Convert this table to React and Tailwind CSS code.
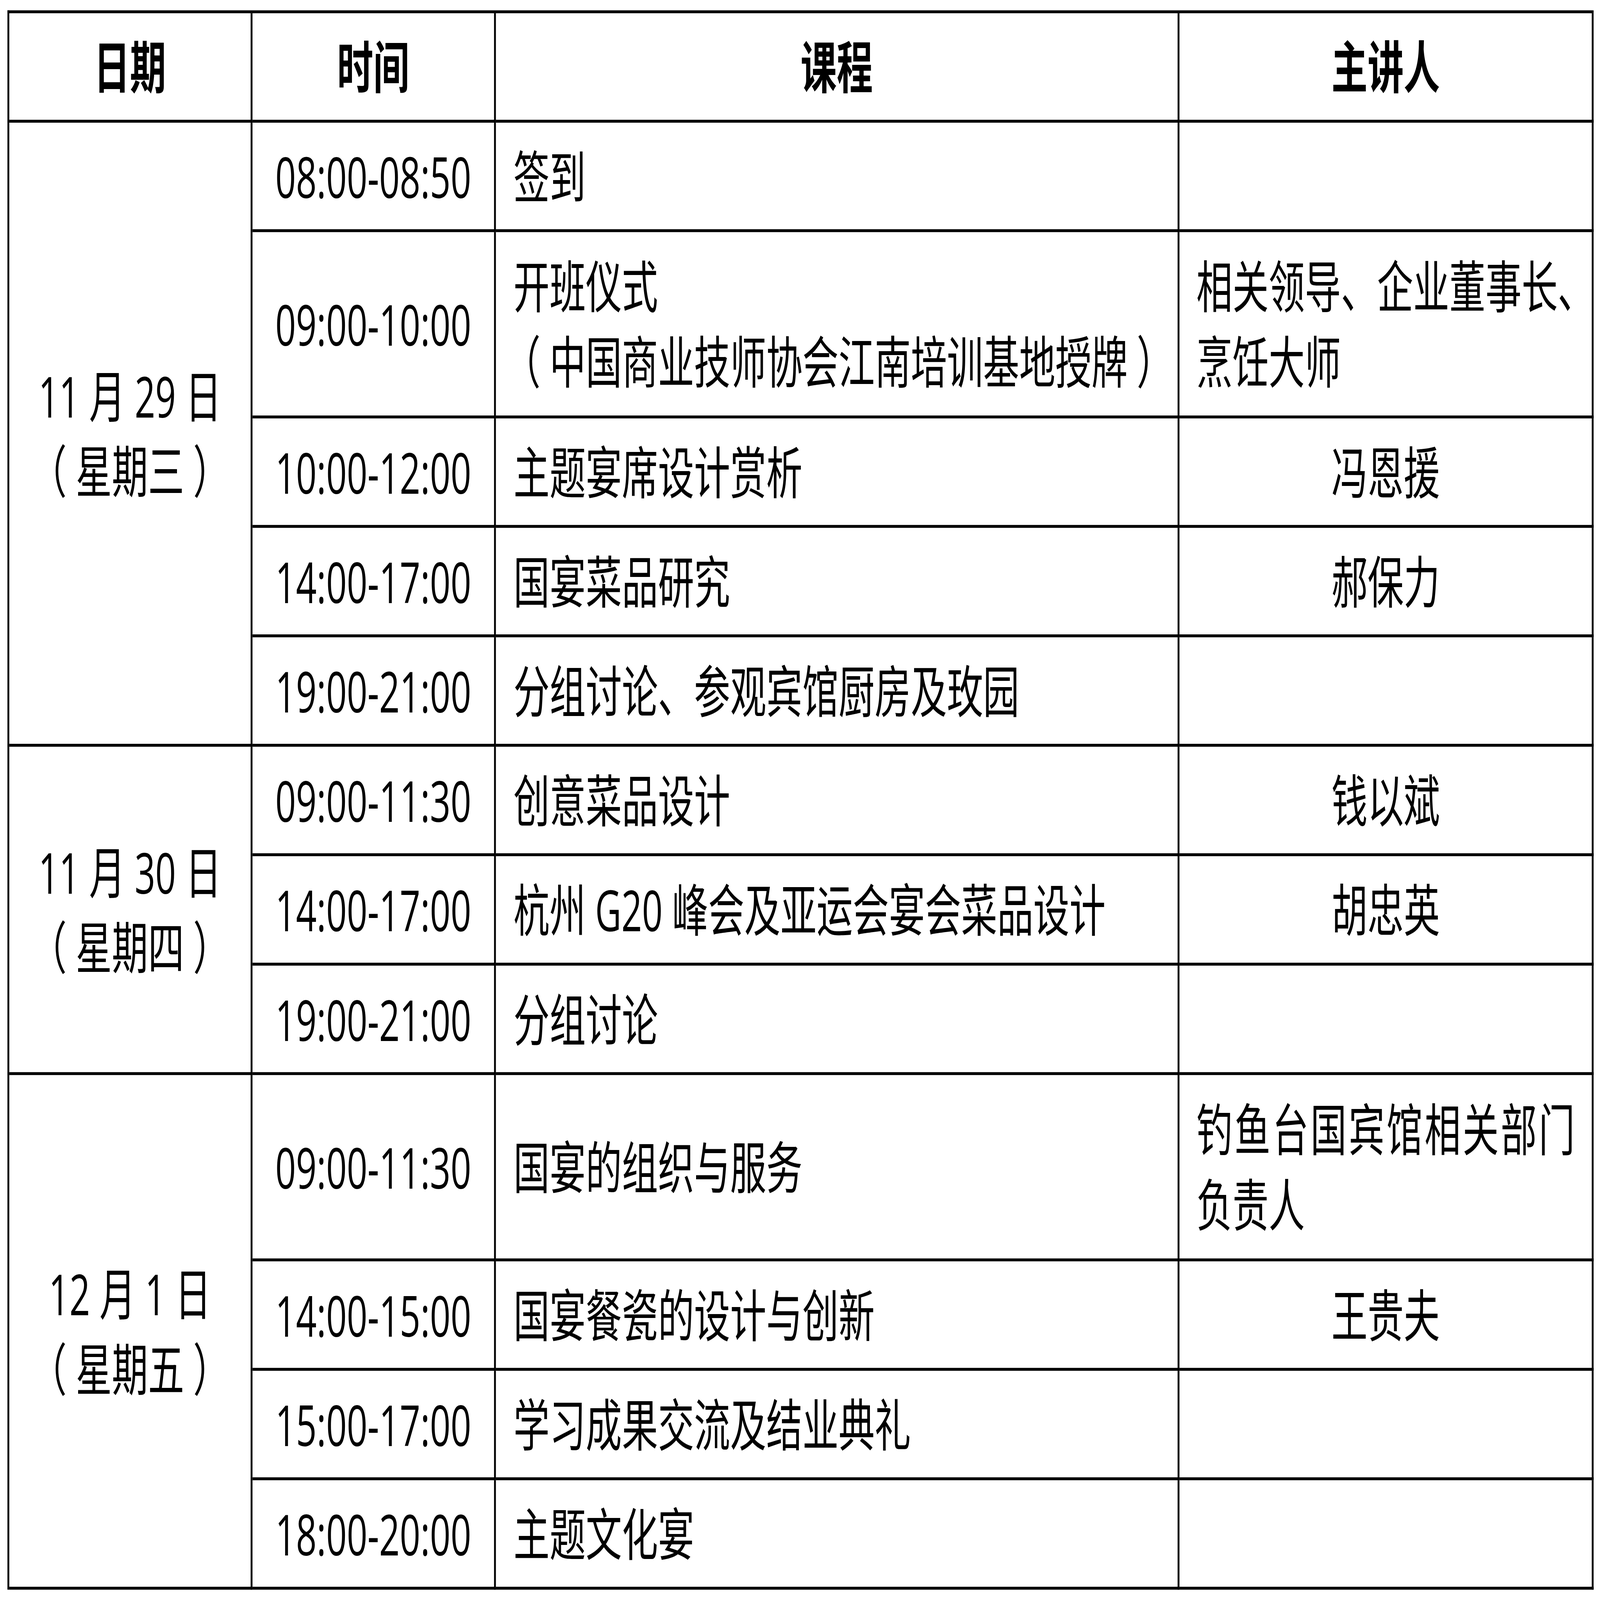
import React, { useEffect, useState } from "react";

const groups = [
  {
    date: "11 月 29 日",
    week: "（星期三）",
    span: "row-span-5",
    rows: [
      { time: "08:00-08:50", course: ["签到"], speaker: null },
      {
        time: "09:00-10:00",
        course: ["开班仪式", "（中国商业技师协会江南培训基地授牌）"],
        speakerLines: ["相关领导、企业董事长、", "烹饪大师"],
      },
      { time: "10:00-12:00", course: ["主题宴席设计赏析"], speaker: "冯恩援" },
      { time: "14:00-17:00", course: ["国宴菜品研究"], speaker: "郝保力" },
      { time: "19:00-21:00", course: ["分组讨论、参观宾馆厨房及玫园"], speaker: null },
    ],
  },
  {
    date: "11 月 30 日",
    week: "（星期四）",
    span: "row-span-3",
    rows: [
      { time: "09:00-11:30", course: ["创意菜品设计"], speaker: "钱以斌" },
      { time: "14:00-17:00", course: ["杭州 G20 峰会及亚运会宴会菜品设计"], speaker: "胡忠英" },
      { time: "19:00-21:00", course: ["分组讨论"], speaker: null },
    ],
  },
  {
    date: "12 月 1 日",
    week: "（星期五）",
    span: "row-span-4",
    rows: [
      {
        time: "09:00-11:30",
        course: ["国宴的组织与服务"],
        speakerLines: ["钓鱼台国宾馆相关部门", "负责人"],
        justifyFirst: true,
      },
      { time: "14:00-15:00", course: ["国宴餐瓷的设计与创新"], speaker: "王贵夫" },
      { time: "15:00-17:00", course: ["学习成果交流及结业典礼"], speaker: null },
      { time: "18:00-20:00", course: ["主题文化宴"], speaker: null },
    ],
  },
];

const cell = "border-r-[9px] border-b-[9px] border-black flex";

function Paren({ text }) {
  const parts = text.split(/([（）])/);
  return (
    <>
      {parts.map((p, i) =>
        p === "（" || p === "）" ? (
          <span
            key={i}
            className="inline-block w-[1em] text-center [font-feature-settings:'halt']"
          >
            {p}
          </span>
        ) : (
          <React.Fragment key={i}>{p}</React.Fragment>
        )
      )}
    </>
  );
}

function useFit() {
  const get = () => ({
    sx: typeof window !== "undefined" ? window.innerWidth / 7750 : 1,
    sy: typeof window !== "undefined" ? window.innerHeight / 4956 : 1,
  });
  const [s, setS] = useState(get);
  useEffect(() => {
    const on = () => setS(get());
    window.addEventListener("resize", on);
    return () => window.removeEventListener("resize", on);
  }, []);
  return s;
}

export default function App() {
  const { sx, sy } = useFit();
  const cells = [];
  ["日期", "时间", "课程", "主讲人"].forEach((h) => {
    cells.push(
      <div key={"h" + h} className={`${cell} items-center justify-center font-bold`}>
        <span className="whitespace-nowrap">{h}</span>
      </div>
    );
  });

  groups.forEach((g, gi) => {
    g.rows.forEach((r, ri) => {
      if (ri === 0) {
        cells.push(
          <div
            key={`d${gi}`}
            className={`${cell} ${g.span} flex-col items-center justify-center`}
          >
            <div className="whitespace-nowrap">{g.date}</div>
            <div className="whitespace-nowrap">
              <Paren text={g.week} />
            </div>
          </div>
        );
      }
      cells.push(
        <div key={`t${gi}-${ri}`} className={`${cell} items-center justify-center`}>
          <span className="whitespace-nowrap">{r.time}</span>
        </div>
      );
      cells.push(
        <div
          key={`c${gi}-${ri}`}
          className={`${cell} flex-col justify-center items-start pl-[85px]`}
        >
          {r.course.map((c, i) => (
            <div key={i} className="whitespace-nowrap">
              <Paren text={c} />
            </div>
          ))}
        </div>
      );
      if (r.speakerLines) {
        cells.push(
          <div
            key={`s${gi}-${ri}`}
            className={`${cell} flex-col justify-center items-stretch px-[82px]`}
          >
            {r.speakerLines.map((s, i) => (
              <div
                key={i}
                className={
                  i === 0 && r.justifyFirst
                    ? "w-full text-justify [text-align-last:justify]"
                    : "whitespace-nowrap"
                }
              >
                {s}
              </div>
            ))}
          </div>
        );
      } else {
        cells.push(
          <div key={`s${gi}-${ri}`} className={`${cell} items-center justify-center`}>
            {r.speaker ? <span className="whitespace-nowrap">{r.speaker}</span> : null}
          </div>
        );
      }
    });
  });

  return (
    <div className="w-screen h-screen overflow-hidden bg-white">
      <div
        className="bg-white w-[7750px] h-[4956px] origin-top-left pl-[36px] pt-[32px] text-black font-['Open_Sans','Noto_Sans_CJK_SC',sans-serif] text-[175px] leading-[233px] [text-spacing-trim:space-all] [text-autospace:no-autospace]"
        style={{ transform: `scale(${sx}, ${sy})` }}
      >
        <div className="grid w-fit grid-cols-[1178px_1179px_3311px_2006px] grid-rows-[339px_339px_577px_339px_339px_339px_339px_339px_339px_577px_339px_339px_339px] border-l-[9px] border-t-[9px] border-black">
          {cells}
        </div>
      </div>
    </div>
  );
}
